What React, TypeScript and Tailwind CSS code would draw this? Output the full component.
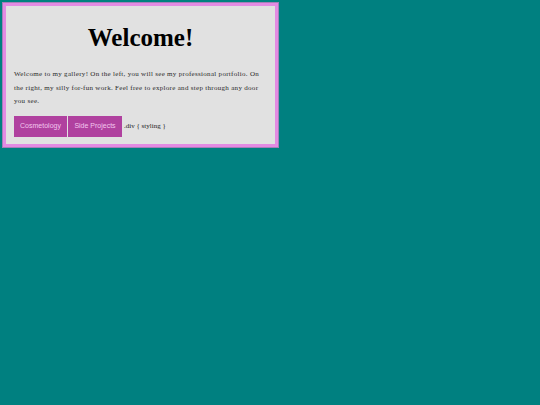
import React from "react";

export default function App() {
  return (
    <div className="min-h-screen w-full bg-[#008080] pt-[3px] pl-[3px]">
      <div className="w-[275px] border-[3px] border-[#e38be3] bg-[#e1e1e1] px-[8px] pb-[7px] shadow-[0_0_0_1px_#a57fb8]">
        <h1 className="pt-[18px] pb-[16px] text-center font-['Liberation_Serif',serif] text-[25px] font-bold leading-[28px] text-black">
          Welcome!
        </h1>
        <p className="font-['Liberation_Serif',serif] text-[7px] leading-[13.5px] tracking-[0.3px] text-[#2a2a2a]">
          Welcome to my gallery! On the left, you will see my professional portfolio. On the right, my silly for-fun work. Feel free to explore and step through any door you see.
        </p>
        <div className="mt-[7px] flex items-center">
          <button className="h-[21px] w-[53px] bg-[#b0419f] font-['Liberation_Sans',sans-serif] text-[7px] text-[#f3c6ee]">
            Cosmetology
          </button>
          <button className="ml-[1px] h-[21px] w-[54px] bg-[#b0419f] font-['Liberation_Sans',sans-serif] text-[7px] text-[#f3c6ee]">
            Side Projects
          </button>
          <span className="ml-[2px] font-['Liberation_Serif',serif] text-[7px] text-[#222]">
            .div {"{"} styling {"}"}
          </span>
        </div>
      </div>
    </div>
  );
}
